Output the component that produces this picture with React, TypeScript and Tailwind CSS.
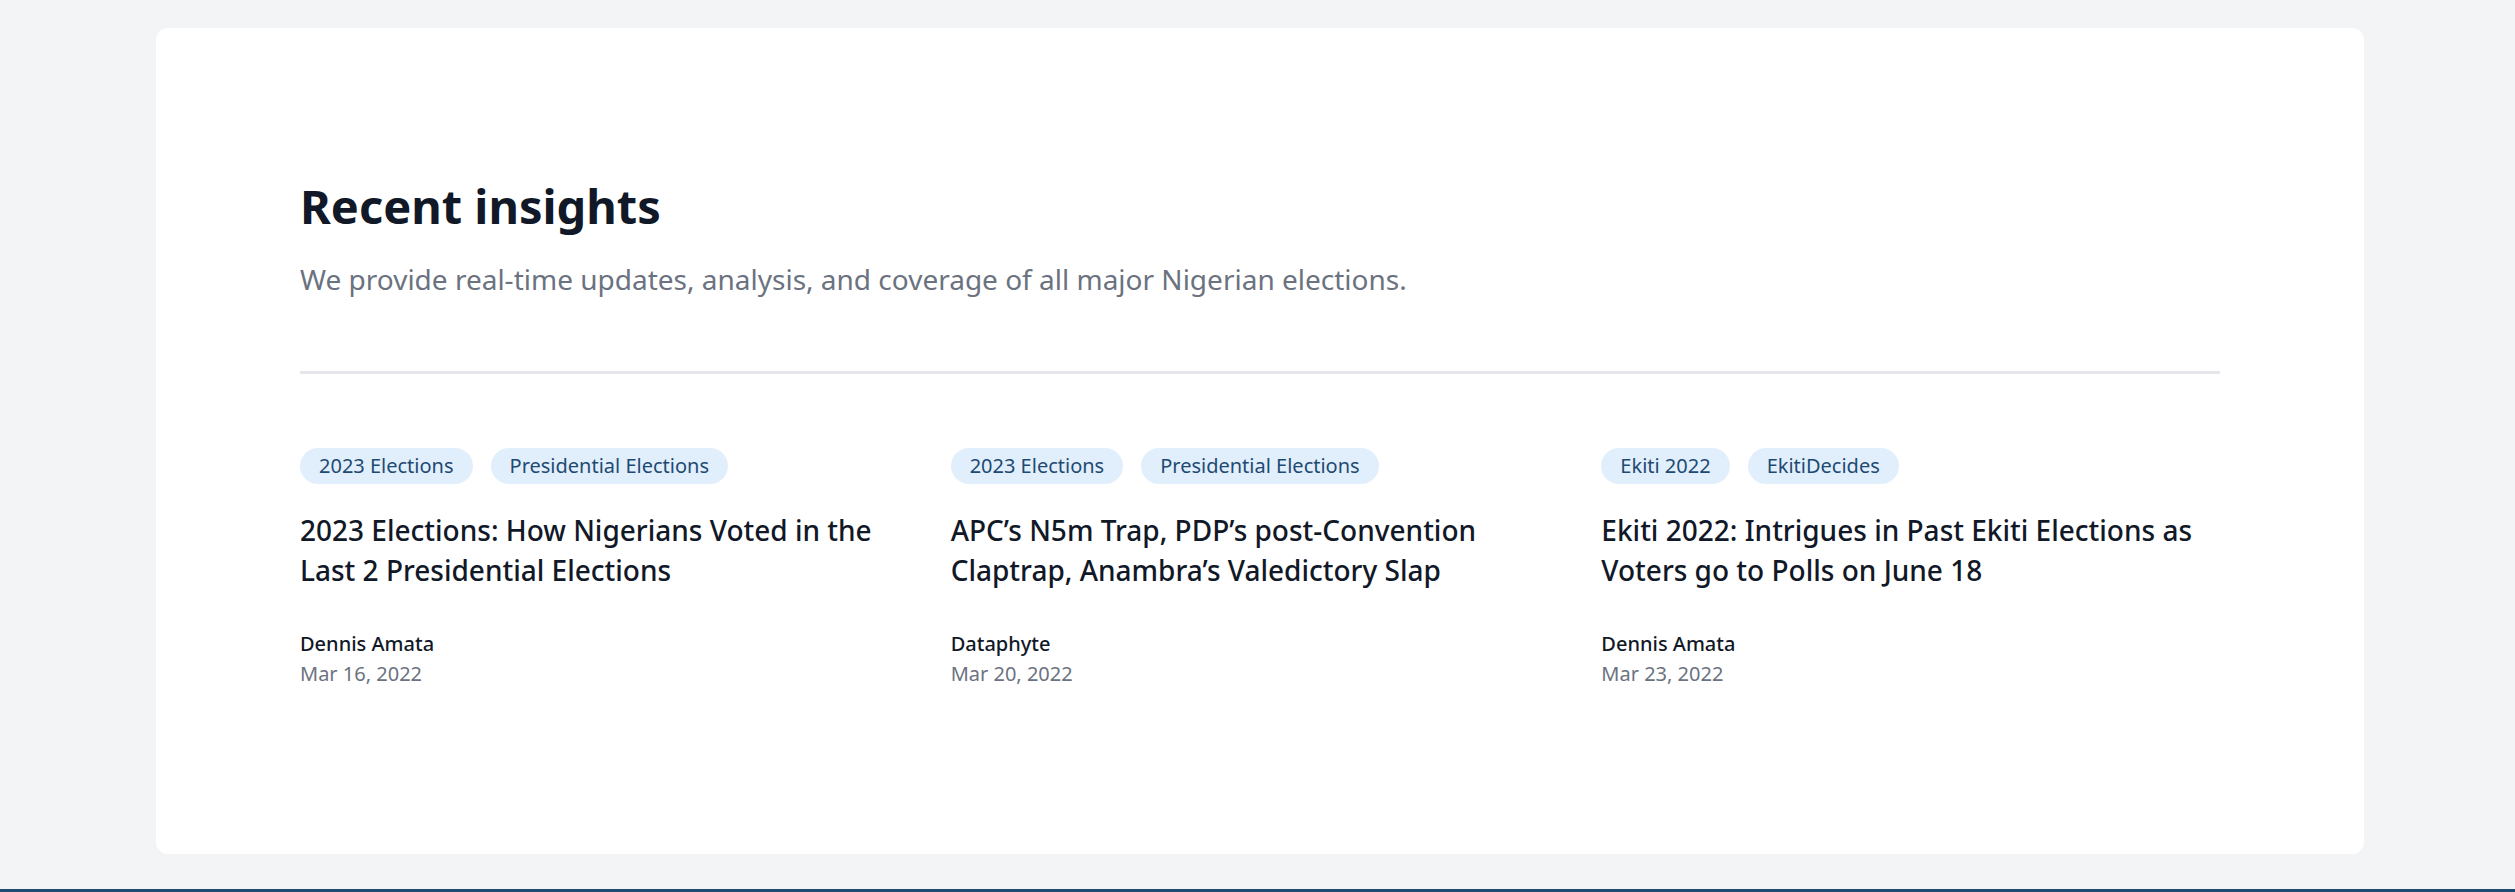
import React from "react";

const posts = [
  {
    tags: ["2023 Elections", "Presidential Elections"],
    title: "2023 Elections: How Nigerians Voted in the Last 2 Presidential Elections",
    author: "Dennis Amata",
    date: "Mar 16, 2022",
  },
  {
    tags: ["2023 Elections", "Presidential Elections"],
    title: "APC’s N5m Trap, PDP’s post-Convention Claptrap, Anambra’s Valedictory Slap",
    author: "Dataphyte",
    date: "Mar 20, 2022",
  },
  {
    tags: ["Ekiti 2022", "EkitiDecides"],
    title: "Ekiti 2022: Intrigues in Past Ekiti Elections as Voters go to Polls on June 18",
    author: "Dennis Amata",
    date: "Mar 23, 2022",
  },
];

const App = () => {
  return (
    <div className="min-h-screen bg-[#f3f4f6] pt-[28px] font-['Noto_Sans',sans-serif]">
      <div className="ml-[156px] w-[2208px] rounded-xl bg-white px-[144px] pt-[150px] pb-[165px]">
        <h2 className="text-[47px] leading-[56px] font-bold text-[#111827]">Recent insights</h2>
        <p className="mt-[25px] text-[28px] leading-[40px] text-[#6b7280]">
          We provide real-time updates, analysis, and coverage of all major Nigerian elections.
        </p>
        <div className="mt-[72px] h-[3px] bg-[#e5e7eb]"></div>
        <div className="mt-[74px] grid grid-cols-3 gap-8">
          {posts.map((post) => (
            <div key={post.title} className="flex flex-col">
              <div className="flex gap-[18px]">
                {post.tags.map((tag) => (
                  <span
                    key={tag}
                    className="h-9 rounded-full bg-[#e1effc] px-[19px] text-[20px] leading-[36px] text-[#1e4a72]"
                  >
                    {tag}
                  </span>
                ))}
              </div>
              <h3 className="mt-[26px] text-[28px] leading-[40px] font-medium text-[#111827]">
                {post.title}
              </h3>
              <div className="mt-[39px] text-[20px] leading-[30px] font-medium text-[#111827]">
                {post.author}
              </div>
              <div className="text-[20px] leading-[30px] text-[#6b7280]">{post.date}</div>
            </div>
          ))}
        </div>
      </div>
      <div className="mt-[35px] h-[40px] bg-[#1e4a72]"></div>
    </div>
  );
};

export default App;
